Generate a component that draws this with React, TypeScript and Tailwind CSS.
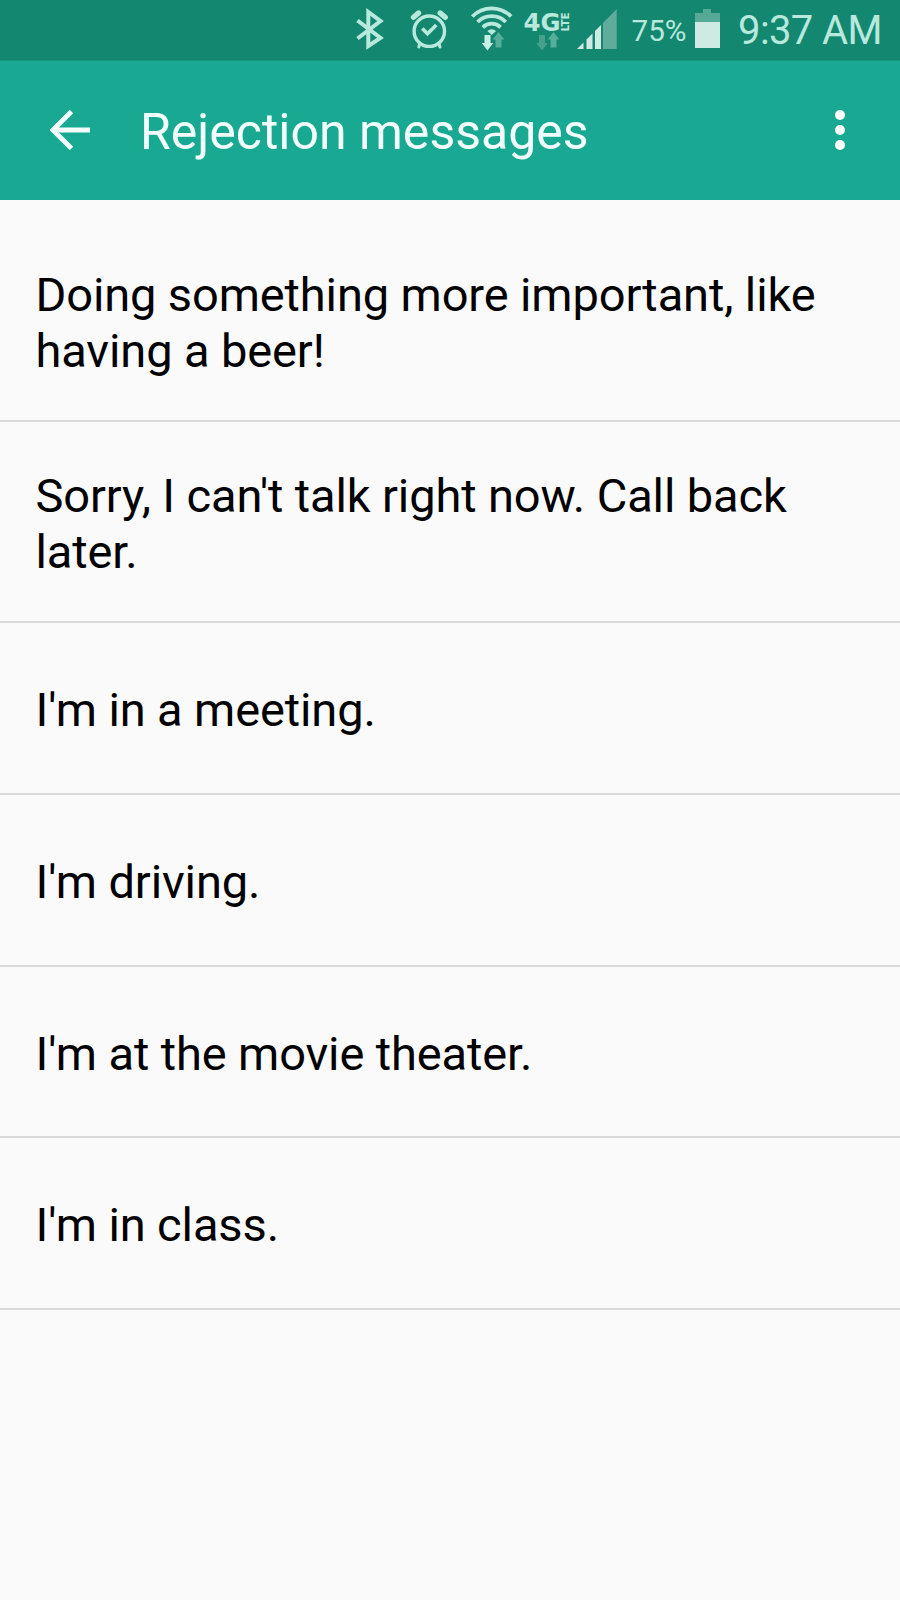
const rows = [
  { text: "Doing something more important, like having a beer!", size: "h-[202px] pt-1.5" },
  { text: "Sorry, I can't talk right now. Call back later.", size: "h-[201px] pt-[5px]" },
  { text: "I'm in a meeting.", size: "h-[172px] pt-1" },
  { text: "I'm driving.", size: "h-[172px] pt-1" },
  { text: "I'm at the movie theater.", size: "h-[171px] pt-1" },
  { text: "I'm in class.", size: "h-[172px] pt-1" },
];

function StatusIcons() {
  return (
    <svg viewBox="350 0 387 60" className="h-[60px] w-[387px] shrink-0" fill="none" aria-hidden="true">
      {/* Bluetooth */}
      <path d="M357.5 20.5 380.5 38 368.3 46V12L380.5 21 357.5 38.5" stroke="#b9e8dc" strokeWidth="4" />
      {/* Alarm */}
      <g stroke="#b9e8dc" strokeLinecap="round">
        <circle cx="429.3" cy="31.2" r="15.2" strokeWidth="3.4" />
        <path d="M413.5 17.3 418.5 13M445.2 17.3 440.2 13" strokeWidth="5.4" />
        <path d="M419.5 44.5 418.8 47M439.2 44.5 440 47" strokeWidth="3" />
        <path d="M422.3 28.5 427.5 33.8 436.3 25" strokeWidth="3.6" strokeLinecap="butt" />
      </g>
      {/* Wi-Fi */}
      <g stroke="#b9e8dc" strokeWidth="3.8">
        <path d="M472.3 16.5A27 27 0 0 1 511.1 16.5" />
        <path d="M477.6 22A20 20 0 0 1 505.8 22" />
        <path d="M482.8 27.3A12.7 12.7 0 0 1 500.6 27.3" />
      </g>
      <path d="M487.3 31Q491.7 27.5 496.1 31L491.7 35Z" fill="#b9e8dc" />
      <path d="M484.5 35H490.5V43H493.2L487.5 50.5 481.8 43H484.5Z" fill="#c9eee5" />
      <path d="M495.5 47.5H501.5V39.5H504.3L498.5 32 492.8 39.5H495.5Z" fill="#56ae9a" />
      {/* Network type */}
      <text x="523.5" y="30.8" fill="#b9e8dc" fontFamily="DejaVu Sans" fontWeight="700" fontSize="24.3" textLength="37" lengthAdjust="spacingAndGlyphs">4G</text>
      <text transform="translate(569.3 31.5) rotate(-90)" fill="#b9e8dc" fontFamily="DejaVu Sans" fontWeight="700" fontSize="9.8" textLength="19" lengthAdjust="spacingAndGlyphs">LTE</text>
      <path d="M539 35H545V43H547.8L542 50.5 536.2 43H539Z" fill="#46a18c" />
      <path d="M550.5 47.5H556.5V39.5H559.3L553.5 32 547.8 39.5H550.5Z" fill="#56ae9a" />
      {/* Signal */}
      <path d="M577 49 583.5 42.5V49Z" fill="#cdeae3" />
      <path d="M586.5 39.5 592.5 33.5V49H586.5Z" fill="#cdeae3" />
      <path d="M595 31 601 25V49H595Z" fill="#cdeae3" />
      <path d="M603 23 616.7 9V49H603Z" fill="#5fab9c" />
      {/* Battery */}
      <text x="631.5" y="41" fill="#b9e8dc" fontFamily="Roboto" fontSize="30" textLength="55" lengthAdjust="spacingAndGlyphs">75%</text>
      <path d="M695 22V13H703V9H711V13H720V22Z" fill="#55a996" />
      <path d="M695 22H720V48H695Z" fill="#cdeae3" />
    </svg>
  );
}

export default function App() {
  return (
    <main className="flex h-[1600px] w-[900px] flex-col overflow-hidden bg-[#fafafa] font-['Roboto',sans-serif] text-black">
      <div className="flex h-[60px] shrink-0 items-start bg-[#148771] pl-[350px] text-[#b9e8dc]">
        <StatusIcons />
        <span className="pt-2 pl-px text-[40px] leading-[46px] tracking-[-0.6px] whitespace-nowrap">9:37 AM</span>
      </div>
      <header className="flex h-[140px] shrink-0 items-center border-t border-[#179780] bg-[#19a993] pr-[53px] pl-[50px] text-[#f2fffd]">
        <svg viewBox="0 0 40 40" className="mb-px size-10" fill="none" stroke="currentColor" strokeWidth="4.8" aria-label="Back">
          <path d="M21.5 1.5 3 20 21.5 38.5M3 20H40" />
        </svg>
        <h1 className="ml-[50px] flex-1 pt-[3px] text-[50px] leading-[60px] whitespace-nowrap">Rejection messages</h1>
        <svg viewBox="0 0 14 40" className="mb-px h-10 w-3.5" fill="white" aria-label="More options">
          <circle cx="7" cy="5" r="5" />
          <circle cx="7" cy="20" r="5" />
          <circle cx="7" cy="35" r="5" />
        </svg>
      </header>
      <ul className="flex flex-col pt-5">
        {rows.map((row) => (
          <li key={row.text} className={`flex shrink-0 items-center border-b-2 border-[#dadada] px-[35.5px] text-[47px] leading-[56px] tracking-[-0.12px] ${row.size}`}>
            {row.text}
          </li>
        ))}
      </ul>
    </main>
  );
}
